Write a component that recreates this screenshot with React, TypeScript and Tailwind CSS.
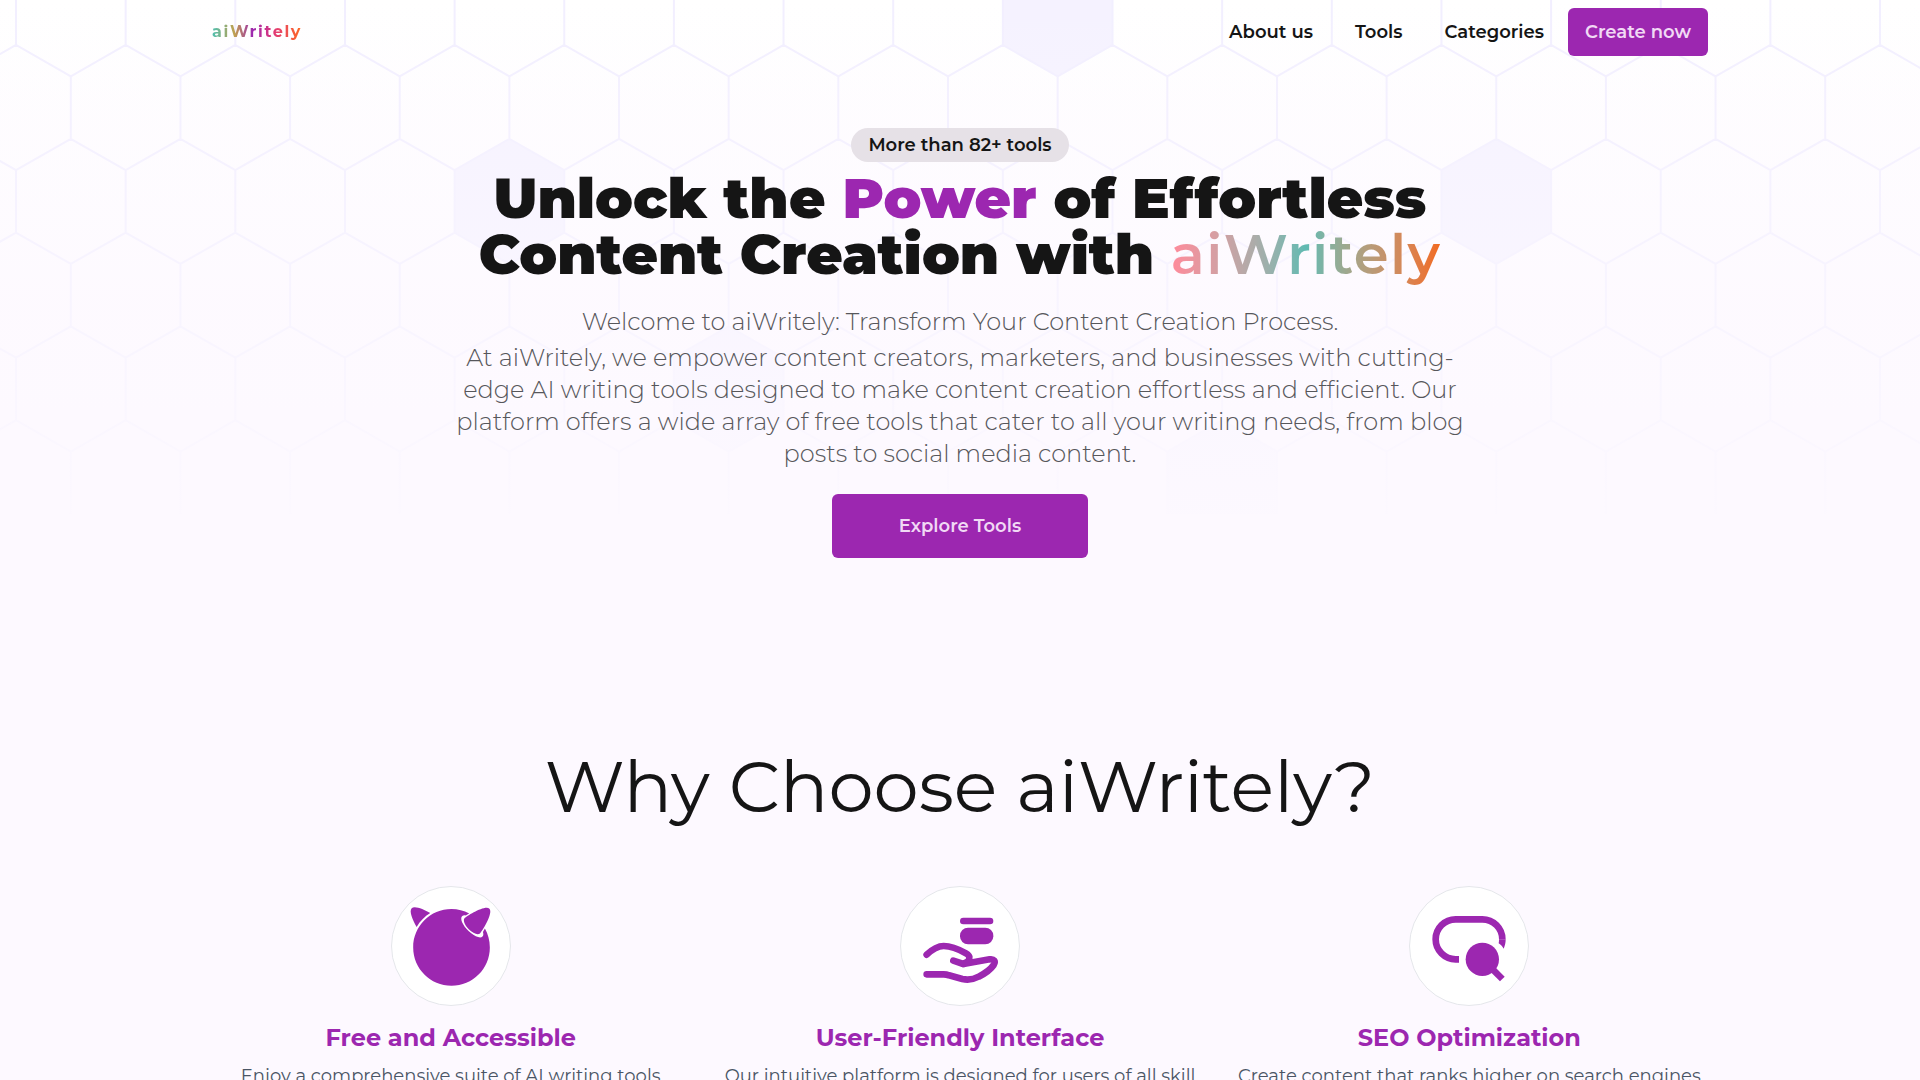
import React from "react";
import { FaFreebsd } from "react-icons/fa";

const STEP = 109.65;
const ROW = 93.8;
const RISE = 31.3;
const COLS = 19;

function rowOffset(row: number) {
  return (row % 2 === 0 ? 16 : 70.8) - STEP;
}

function hexPath(row: number, col: number) {
  const x = rowOffset(row) + col * STEP;
  const top = -17.5 + row * ROW;
  const h = ROW - RISE;
  return `M${x} ${top}l${STEP / 2} ${-RISE}l${STEP / 2} ${RISE}v${h}l${-STEP / 2} ${RISE}l${-STEP / 2} ${-RISE}z`;
}

const outlines = [0, 1, 2, 3, 4, 5]
  .map((row) => Array.from({ length: COLS }, (_, col) => hexPath(row, col)).join(""))
  .join("");

const filled = [hexPath(0, 10), hexPath(2, 5), hexPath(2, 14), hexPath(4, 7), hexPath(5, 11)].join("");

function HexBackdrop() {
  return (
    <svg
      aria-hidden="true"
      className="absolute inset-x-0 top-0 -z-10 h-[514px] w-full"
      viewBox="0 0 1920 514"
      preserveAspectRatio="xMidYMin slice"
    >
      <defs>
        <linearGradient id="fade" x1="0" y1="0" x2="0" y2="1">
          <stop offset="0" stopColor="#fdf9ff" stopOpacity="0" />
          <stop offset="0.6" stopColor="#fdf9ff" stopOpacity="0.55" />
          <stop offset="1" stopColor="#fdf9ff" stopOpacity="0.92" />
        </linearGradient>
        <linearGradient id="base" x1="0" y1="0" x2="0" y2="1">
          <stop offset="0" stopColor="#ffffff" />
          <stop offset="0.8" stopColor="#fdf9ff" />
        </linearGradient>
      </defs>
      <rect width="1920" height="514" fill="url(#base)" />
      <path d={filled} fill="#f5f2ff" />
      <path d={outlines} fill="none" stroke="#f2efff" strokeWidth="2" />
      <rect width="1920" height="514" fill="url(#fade)" />
    </svg>
  );
}

function HandIcon() {
  return (
    <svg viewBox="0 0 24 24" className="size-20" fill="none" stroke="currentColor" strokeWidth="2" strokeLinecap="round" strokeLinejoin="round" aria-hidden="true">
      <path d="M13 4.5h8" />
      <rect x="12" y="6.5" width="10" height="5" rx="2.4" fill="currentColor" stroke="none" />
      <path d="M2 14.6C4 12.7 5.500 12 7.100 12c2 0 4.400.9 6.700 2.200 1.200.7 1.300 1.500.6 2.400L13 17.400l-3-1" />
      <path d="M13 17.400l7.900-1.400c1.300-.2 1.900.6 1.200 1.700-.9 1.300-2.900 2.700-4.500 3.500-1.500.8-3.100 1.100-4.900.7l-4-1.100c-.5-.2-1-.3-1.600-.3H2" />
    </svg>
  );
}

function SearchIcon() {
  return (
    <svg viewBox="0 0 24 24" className="size-20" fill="none" stroke="currentColor" strokeWidth="2" aria-hidden="true">
      <path d="M9 16H8A6 6 0 0 1 8 4h8a6 6 0 0 1 6 6" />
      <path d="M21 10h2c0 1-.2 1.900-.6 2.800-.3-.6-.8-1.100-1.500-1.600.1-.4.1-.8.100-1.200z" fill="currentColor" stroke="none" />
      <circle cx="16" cy="16" r="5" fill="currentColor" stroke="none" />
      <path d="M18.500 18.400L22 21.900" />
    </svg>
  );
}

const features = [
  {
    title: "Free and Accessible",
    text: "Enjoy a comprehensive suite of AI writing tools",
    icon: <FaFreebsd className="size-[91px]" aria-hidden="true" />,
  },
  {
    title: "User-Friendly Interface",
    text: "Our intuitive platform is designed for users of all skill",
    icon: <HandIcon />,
  },
  {
    title: "SEO Optimization",
    text: "Create content that ranks higher on search engines",
    icon: <SearchIcon />,
  },
];

export default function App() {
  return (
    <div className="relative isolate h-screen overflow-hidden bg-[#fdf9ff] font-['Montserrat','Inter',sans-serif] text-[#151515]">
      <HexBackdrop />

      <header className="mx-auto flex h-16 max-w-[1536px] items-center justify-between px-5">
        <a
          href="#"
          className="bg-[linear-gradient(90deg,#4dbfb0,#c0a050_25%,#9c27b0_45%,#e0397a_68%,#ff6a1f)] bg-clip-text text-base font-bold tracking-widest text-transparent"
        >
          aiWritely
        </a>
        <nav className="flex items-center text-lg font-semibold">
          <a href="#about" className="mr-[42px]">About us</a>
          <a href="#tools" className="mr-[42px]">Tools</a>
          <a href="#categories" className="mr-6">Categories</a>
          <button type="button" className="h-12 w-[140px] rounded-md bg-[#9c27b0] text-[#f1d9f5]">
            Create now
          </button>
        </nav>
      </header>

      <main>
        <section className="mx-auto flex max-w-[1024px] flex-col items-center pt-16 text-center">
          <span className="flex h-[34px] items-center rounded-full bg-[#e6e1e7] px-[17px] text-lg font-semibold">
            More than 82+ tools
          </span>
          <h1 className="mt-2 text-[56px] leading-14 font-black whitespace-nowrap">
            Unlock the <span className="text-[#9c27b0]">Power</span> of Effortless
            <br />
            Content Creation with{" "}
            <span className="bg-linear-to-r from-[#ff8a9b] via-[#5fbab2] to-[#f2691c] bg-clip-text font-semibold tracking-wide text-transparent">
              aiWritely
            </span>
          </h1>
          <p className="mt-6 text-2xl leading-8 font-light text-[#57575b]">
            Welcome to aiWritely: Transform Your Content Creation Process.
          </p>
          <p className="mt-1 text-2xl leading-8 font-light text-[#57575b]">
            At aiWritely, we empower content creators, marketers, and businesses with cutting-
            <br />
            edge AI writing tools designed to make content creation effortless and efficient. Our
            <br />
            platform offers a wide array of free tools that cater to all your writing needs, from blog
            <br />
            posts to social media content.
          </p>
          <button type="button" className="mt-6 h-16 w-64 rounded-md bg-[#9c27b0] text-lg font-semibold text-[#f1d9f5]">
            Explore Tools
          </button>
        </section>

        <section className="mx-auto max-w-[1536px] px-5 pt-48 text-center">
          <h2 className="text-7xl leading-[72px] font-normal">Why Choose aiWritely?</h2>
          <div className="mt-16 grid grid-cols-3 gap-8">
            {features.map((f) => (
              <article key={f.title} className="flex flex-col items-center">
                <div className="flex size-[120px] items-center justify-center rounded-full border border-gray-200 bg-white text-[#9c27b0]">
                  {f.icon}
                </div>
                <h3 className="mt-4 text-2xl leading-8 font-bold text-[#9c27b0]">{f.title}</h3>
                <p className="mt-2 text-lg leading-7 whitespace-nowrap text-gray-600">{f.text}</p>
              </article>
            ))}
          </div>
        </section>
      </main>
    </div>
  );
}
